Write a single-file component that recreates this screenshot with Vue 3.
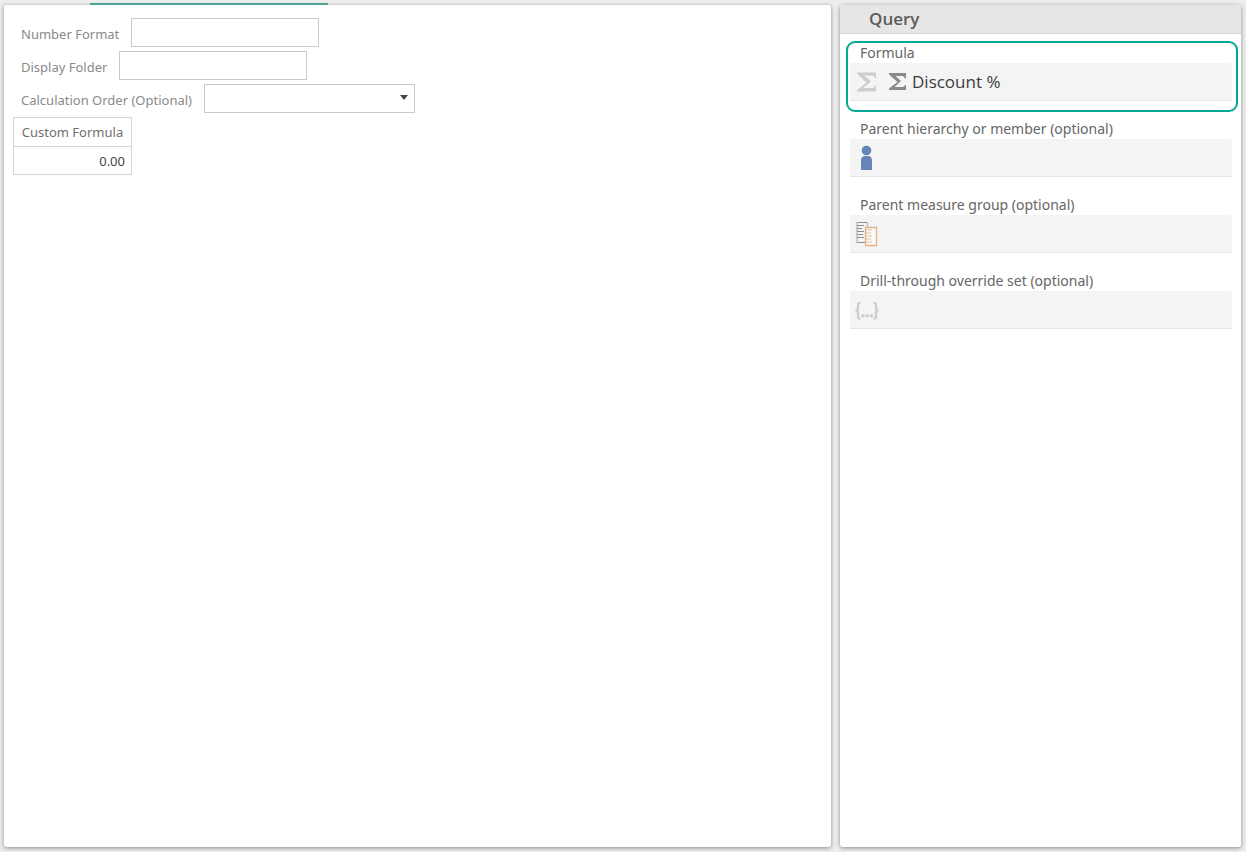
<script setup>
import { ref } from 'vue'

const numberFormat = ref('')
const displayFolder = ref('')
const calculationOrder = ref('')

const slots = [
  { id: 'formula', label: 'Formula', active: true, items: ['Discount %'] },
  { id: 'hierarchy', label: 'Parent hierarchy or member (optional)', items: [] },
  { id: 'group', label: 'Parent measure group (optional)', items: [] },
  { id: 'drill', label: 'Drill-through override set (optional)', items: [] },
]
</script>

<template>
  <div class="page">
    <main class="panel editor">
      <div class="tab-marker"></div>
      <form class="fields" @submit.prevent>
        <div class="field">
          <label for="number-format">Number Format</label>
          <input id="number-format" v-model="numberFormat" type="text" />
        </div>
        <div class="field">
          <label for="display-folder">Display Folder</label>
          <input id="display-folder" v-model="displayFolder" type="text" />
        </div>
        <div class="field">
          <label for="calculation-order">Calculation Order (Optional)</label>
          <div class="select-wrap">
            <select id="calculation-order" v-model="calculationOrder">
              <option value=""></option>
            </select>
            <svg class="caret" viewBox="0 0 8 5" aria-hidden="true"><path d="M0 0h8L4 5z" fill="#444" /></svg>
          </div>
        </div>
      </form>
      <table class="preview">
        <thead>
          <tr><th scope="col">Custom Formula</th></tr>
        </thead>
        <tbody>
          <tr><td>0.00</td></tr>
        </tbody>
      </table>
    </main>

    <aside class="panel query">
      <h2>Query</h2>
      <div class="slots">
        <section v-for="slot in slots" :key="slot.id" class="slot" :class="{ active: slot.active }">
          <h3 :id="slot.id + '-label'">{{ slot.label }}</h3>
          <div class="drop" role="group" :aria-labelledby="slot.id + '-label'">
            <svg class="slot-icon" viewBox="0 0 24 26" aria-hidden="true">
              <path
                v-if="slot.id === 'formula'"
                d="M2 3.500H21V9H19.800Q19.500 6.500 17.500 6.500H9L16 12.500L8 19H17.500Q19.500 19 20 16.500H21V22.500H2V21.300L11.500 13.500L2 4.700Z"
                fill="#cdcdcd"
              />
              <g v-else-if="slot.id === 'hierarchy'" fill="#6685b6">
                <circle cx="11.500" cy="5.500" r="4.800" />
                <path d="M6 25V15.500Q6 11.500 9.500 11H13.500Q17 11.500 17 15.500V25Z" />
              </g>
              <g v-else-if="slot.id === 'group'" fill="none">
                <path d="M1 1.500H13M1 21.500H10" stroke="#8c8c8c" />
                <path d="M2 1V22M12.500 1V6" stroke="#c4c4c4" stroke-width="1.600" />
                <path d="M2 4.500H9M2 7.500H7M2 10.500H9M2 13.500H8M2 16.500H9" stroke="#8c8c8c" />
                <path d="M10.500 6.500H21.500V24.500H10.500Z" fill="#fafafa" stroke="#e3b288" stroke-width="1.300" />
                <path d="M11 9H17M11 12H16M11 15H17M11 18H16M11 21H17" stroke="#e9bd98" />
              </g>
              <g v-else fill="none" stroke="#cbcbcb" stroke-width="2.200">
                <path d="M5.500 6H4.500Q3 6 3 8V11Q3 13.500 .5 13.500Q3 13.500 3 16V19.500Q3 21.500 4.500 21.500H5.500" />
                <path d="M18.500 6H19.500Q21 6 21 8V11Q21 13.500 23.500 13.500Q21 13.500 21 16V19.500Q21 21.500 19.500 21.500H18.500" />
                <g fill="#cbcbcb" stroke="none">
                  <circle cx="8" cy="18.800" r="1.700" />
                  <circle cx="12.200" cy="18.800" r="1.700" />
                  <circle cx="16.400" cy="18.800" r="1.700" />
                </g>
              </g>
            </svg>
            <span v-for="item in slot.items" :key="item" class="chip">
              <svg viewBox="0 0 17 17" aria-hidden="true">
                <path
                  d="M0 0H17V5.500H15.800Q15.500 3 13.500 3H6.500L12 8L5.500 14H13.500Q15.500 14 16 12H17V17H0V15.500L8.500 9L0 1.500Z"
                  fill="#898989"
                />
              </svg>
              {{ item }}
            </span>
          </div>
        </section>
      </div>
    </aside>
  </div>
</template>

<style>
body {
  background: #ededed;
}
</style>

<style scoped>
.page {
  box-sizing: border-box;
  min-height: 100vh;
  padding: 5px 5px 5px 4px;
  display: grid;
  grid-template-columns: minmax(0, 1fr) 401px;
  gap: 9px;
  font-family: "Noto Sans", "Open Sans", sans-serif;
}

.panel {
  position: relative;
  background: #fff;
  border-radius: 3px;
  box-shadow: 0 1px 4px rgba(0, 0, 0, 0.42);
}

.editor {
  padding: 13px 9px;
}

.tab-marker {
  position: absolute;
  top: -2px;
  left: 86px;
  width: 238px;
  height: 2px;
  background: #4fa394;
}

.fields {
  display: flex;
  flex-direction: column;
  gap: 4px;
  padding-left: 8px;
}

.field {
  display: flex;
  align-items: center;
  gap: 12px;
  height: 29px;
  font-size: 13px;
  color: #8a8a8a;
}

label {
  padding-top: 3px;
}

.field input,
.field select {
  box-sizing: border-box;
  width: 188px;
  height: 29px;
  margin: 0;
  padding: 0 6px;
  border: 1px solid #c9c9c9;
  border-radius: 0;
  background: #fff;
  font: inherit;
  color: #444;
}

.select-wrap {
  position: relative;
  display: flex;
}

.field select {
  width: 211px;
  padding-right: 20px;
  appearance: none;
}

.caret {
  position: absolute;
  top: 11px;
  right: 7px;
  width: 8px;
  height: 5px;
  pointer-events: none;
}

.preview {
  min-width: 119px;
  margin-top: 4px;
  border-collapse: collapse;
  font-size: 13px;
}

.preview th,
.preview td {
  box-sizing: border-box;
  height: 29px;
  padding: 0 6px;
  border: 1px solid #d5d5d5;
  line-height: 20px;
}

.preview th {
  font-weight: 400;
  color: #707070;
}

.preview td {
  height: 28px;
  text-align: right;
  color: #444;
}

.query h2 {
  box-sizing: border-box;
  height: 29px;
  margin: 0;
  padding-left: 29px;
  border-bottom: 1px solid #d6d6d6;
  border-radius: 3px 3px 0 0;
  background: #e6e6e6;
  font-family: "Open Sans", "Noto Sans", sans-serif;
  font-size: 17px;
  font-weight: 600;
  line-height: 28px;
  color: #5c5c5c;
}

.slots {
  display: flex;
  flex-direction: column;
  gap: 18px;
  padding: 9px 9px 0 10px;
}

.slot {
  position: relative;
}

.slot.active::after {
  content: "";
  position: absolute;
  inset: -2px -6px -11px -4px;
  border: 2px solid #00a896;
  border-radius: 9px;
  pointer-events: none;
}

.slot h3 {
  margin: 0;
  padding-left: 10px;
  font-size: 14px;
  font-weight: 400;
  line-height: 20px;
  color: #666;
}

.drop {
  box-sizing: border-box;
  display: flex;
  align-items: center;
  gap: 10px;
  height: 38px;
  padding-left: 5px;
  border-bottom: 1px solid #e4e4e4;
  border-radius: 3px 3px 0 0;
  background: #f4f4f4;
}

.slot-icon {
  width: 24px;
  height: 26px;
}

.chip {
  display: flex;
  align-items: center;
  gap: 6px;
  font-family: "Open Sans", "Noto Sans", sans-serif;
  font-size: 17px;
  line-height: 24px;
  color: #3c3c3c;
}

.chip svg {
  width: 17px;
  height: 17px;
}
</style>
